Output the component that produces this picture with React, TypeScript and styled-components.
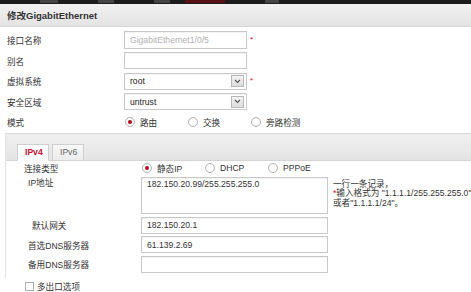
import React from "react";
import styled, { createGlobalStyle, css } from "styled-components";

const Global = createGlobalStyle`
  html, body { margin: 0; padding: 0; background: #fff; }
  body {
    font-family: "Liberation Sans", "Noto Sans CJK SC", sans-serif;
    font-size: 8.6px;
    color: #333;
    overflow: hidden;
  }
  * { box-sizing: border-box; }
`;

const Page = styled.div`
  width: 471px;
  height: 292px;
  overflow: hidden;
`;

const TopBar = styled.div`
  height: 4px;
  background: #1c1c1c;
  display: flex;
`;

const TopSeg = styled.span<{ $w: number; $c: string }>`
  width: ${(p) => p.$w}px;
  height: 3px;
  background: ${(p) => p.$c};
`;

const TitleBar = styled.div`
  height: 23px;
  background: linear-gradient(#f1f1f1, #e3e3e3);
  border-bottom: 1px solid #d6d6d6;
  display: flex;
  align-items: center;
  padding-left: 7px;
  font-size: 9.5px;
  font-weight: bold;
  color: #333;
`;

const Form = styled.div`
  padding-top: 3px;
  display: flex;
  flex-direction: column;
`;

const Row = styled.div<{ $h?: number; $top?: boolean }>`
  height: ${(p) => p.$h ?? 20.5}px;
  flex-shrink: 0;
  display: flex;
  align-items: ${(p) => (p.$top ? "flex-start" : "center")};
`;

const Label = styled.div<{ $w: number; $indent?: number; $pt?: number }>`
  width: ${(p) => p.$w}px;
  padding-left: ${(p) => p.$indent ?? 0}px;
  padding-top: ${(p) => p.$pt ?? 0}px;
  flex-shrink: 0;
  color: #333;
  white-space: nowrap;
`;

const fieldBase = css`
  border: 1px solid #c9c9c9;
  background: #fff;
  box-shadow: inset 0 1px 1px rgba(0, 0, 0, 0.05);
  font-family: "Liberation Sans", "Noto Sans CJK SC", sans-serif;
  font-size: 8.6px;
  color: #333;
  padding: 0 5px;
  display: flex;
  align-items: center;
  flex-shrink: 0;
`;

const Field = styled.div<{ $w: number; $h?: number; $muted?: boolean }>`
  ${fieldBase};
  width: ${(p) => p.$w}px;
  height: ${(p) => p.$h ?? 17}px;
  color: ${(p) => (p.$muted ? "#b0b0b0" : "#333")};
`;

const Area = styled.div<{ $w: number; $h: number }>`
  ${fieldBase};
  width: ${(p) => p.$w}px;
  height: ${(p) => p.$h}px;
  margin-top: 2px;
  align-items: flex-start;
  padding-top: 1px;
  line-height: 10px;
`;

const SelectBox = styled.div`
  ${fieldBase};
  width: 123px;
  height: 17px;
  justify-content: space-between;
  padding-right: 2px;
  color: #222;
`;

const DropBtn = styled.span`
  width: 13px;
  height: 12px;
  border: 1px solid #b8b8b8;
  background: linear-gradient(#f4f4f4, #dcdcdc);
  display: flex;
  align-items: center;
  justify-content: center;
`;

const Star = styled.span`
  color: #e0102a;
  font-size: 8px;
  margin-left: 3px;
  align-self: flex-start;
  margin-top: 5px;
`;

const RadioGroup = styled.div<{ $ml: number }>`
  display: flex;
  margin-left: ${(p) => p.$ml}px;
`;

const Option = styled.label`
  width: 63px;
  display: flex;
  align-items: center;
  gap: 5px;
  white-space: nowrap;
  color: #333;
`;

const Radio = styled.span<{ $on?: boolean }>`
  width: 10px;
  height: 10px;
  border-radius: 50%;
  border: 1px solid #b3b3b3;
  background: radial-gradient(circle, #fff 55%, #f0f0f0);
  display: flex;
  align-items: center;
  justify-content: center;
  flex-shrink: 0;
  &::after {
    content: "";
    width: 4px;
    height: 4px;
    border-radius: 50%;
    background: ${(p) => (p.$on ? "#b3001b" : "transparent")};
  }
`;

const Panel = styled.div`
  margin-left: 5px;
  border-top: 1px solid #d9d9d9;
  border-left: 1px solid #e2e2e2;
`;

const TabBar = styled.div`
  height: 27px;
  background: linear-gradient(#f0f0f0, #e4e4e4);
  border-bottom: 1px solid #d4d4d4;
  display: flex;
  align-items: flex-end;
  padding-left: 11px;
  gap: 3px;
`;

const Tab = styled.div<{ $active?: boolean }>`
  width: 32px;
  height: 17px;
  margin-bottom: -1px;
  border: 1px solid #cfcfcf;
  border-bottom: ${(p) => (p.$active ? "1px solid #fff" : "1px solid #d4d4d4")};
  background: ${(p) => (p.$active ? "#fff" : "linear-gradient(#f7f7f7, #ececec)")};
  color: ${(p) => (p.$active ? "#c8102e" : "#666")};
  font-weight: ${(p) => (p.$active ? "bold" : "normal")};
  display: flex;
  align-items: center;
  padding-left: 7px;
  font-size: 8.6px;
`;

const TabBody = styled.div`
  padding-bottom: 4px;
  display: flex;
  flex-direction: column;
`;

const Hint = styled.div`
  margin-left: 5px;
  padding-top: 5px;
  line-height: 9.8px;
  color: #333;
  white-space: nowrap;
`;

const HintStar = styled.span`
  color: #e0102a;
`;

const CheckRow = styled.div`
  display: flex;
  align-items: center;
  gap: 3px;
  padding-left: 25px;
  margin-top: 2px;
`;

const Check = styled.span`
  width: 9px;
  height: 9px;
  border: 1px solid #b0b0b0;
  background: #fff;
`;

const Chevron = () => (
  <svg width="7" height="5" viewBox="0 0 7 5">
    <path d="M1 1 L3.5 3.5 L6 1" fill="none" stroke="#555" strokeWidth="1.1" />
  </svg>
);

const LW = 124;
const TLW = 135;

export default function App() {
  return (
    <Page>
      <Global />
      <TopBar>
        <TopSeg $w={40} $c="#1c1c1c" />
        <TopSeg $w={18} $c="#444" />
        <TopSeg $w={40} $c="#1c1c1c" />
        <TopSeg $w={16} $c="#444" />
        <TopSeg $w={40} $c="#1c1c1c" />
        <TopSeg $w={16} $c="#444" />
        <TopSeg $w={15} $c="#1c1c1c" />
        <TopSeg $w={40} $c="#5a0f14" />
        <TopSeg $w={40} $c="#1c1c1c" />
        <TopSeg $w={14} $c="#444" />
      </TopBar>
      <TitleBar>修改GigabitEthernet</TitleBar>
      <Form>
        <Row>
          <Label $w={LW} $indent={7}>接口名称</Label>
          <Field $w={123} $h={18} $muted>GigabitEthernet1/0/5</Field>
          <Star>*</Star>
        </Row>
        <Row>
          <Label $w={LW} $indent={7}>别名</Label>
          <Field $w={123} />
        </Row>
        <Row>
          <Label $w={LW} $indent={7}>虚拟系统</Label>
          <SelectBox>
            root
            <DropBtn>
              <Chevron />
            </DropBtn>
          </SelectBox>
          <Star>*</Star>
        </Row>
        <Row>
          <Label $w={LW} $indent={7}>安全区域</Label>
          <SelectBox>
            untrust
            <DropBtn>
              <Chevron />
            </DropBtn>
          </SelectBox>
        </Row>
        <Row>
          <Label $w={LW} $indent={7}>模式</Label>
          <RadioGroup $ml={1}>
            <Option>
              <Radio $on />
              路由
            </Option>
            <Option>
              <Radio />
              交换
            </Option>
            <Option>
              <Radio />
              旁路检测
            </Option>
          </RadioGroup>
        </Row>
      </Form>
      <Panel>
        <TabBar>
          <Tab $active>IPv4</Tab>
          <Tab>IPv6</Tab>
        </TabBar>
        <TabBody>
          <Row $h={14}>
            <Label $w={TLW} $indent={18}>连接类型</Label>
            <RadioGroup $ml={1}>
              <Option>
                <Radio $on />
                静态IP
              </Option>
              <Option>
                <Radio />
                DHCP
              </Option>
              <Option>
                <Radio />
                PPPoE
              </Option>
            </RadioGroup>
          </Row>
          <Row $h={41} $top>
            <Label $w={TLW} $indent={22} $pt={1}>IP地址</Label>
            <Area $w={187} $h={37}>182.150.20.99/255.255.255.0</Area>
            <Hint>
              一行一条记录，
              <br />
              <HintStar>*</HintStar>输入格式为 "1.1.1.1/255.255.255.0"
              <br />
              或者"1.1.1.1/24"。
            </Hint>
          </Row>
          <Row $h={19.5}>
            <Label $w={TLW} $indent={26}>默认网关</Label>
            <Field $w={187} $h={17}>182.150.20.1</Field>
          </Row>
          <Row $h={19.5}>
            <Label $w={TLW} $indent={22}>首选DNS服务器</Label>
            <Field $w={187} $h={17}>61.139.2.69</Field>
          </Row>
          <Row $h={19.5}>
            <Label $w={TLW} $indent={22}>备用DNS服务器</Label>
            <Field $w={187} $h={17} />
          </Row>
        </TabBody>
      </Panel>
      <CheckRow>
        <Check />
        多出口选项
      </CheckRow>
    </Page>
  );
}
